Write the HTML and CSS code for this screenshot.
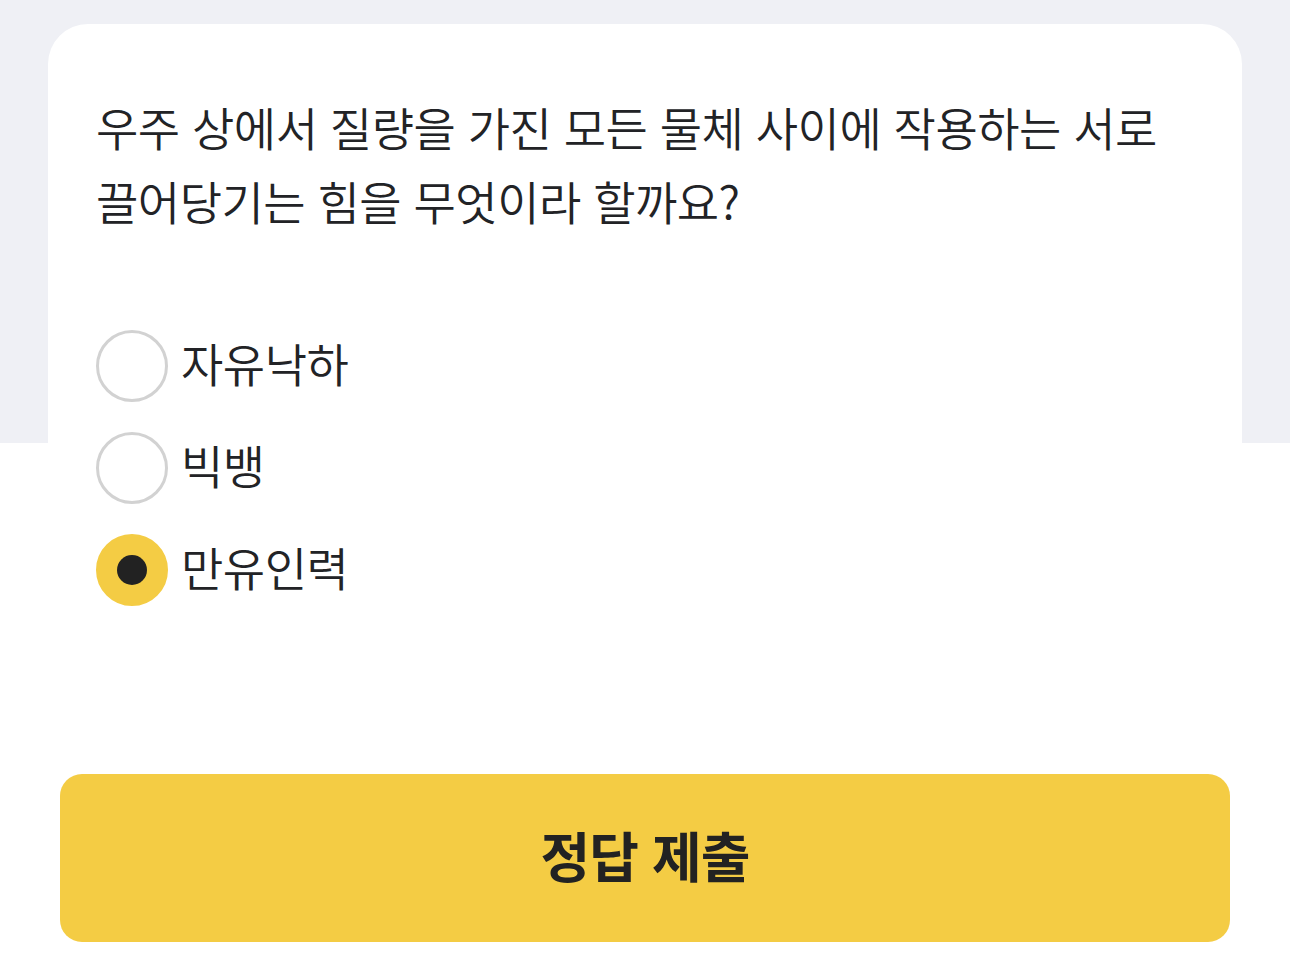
FILE: index.html
```html
<!DOCTYPE html>
<html lang="ko">
<head>
<meta charset="utf-8">
<title>퀴즈</title>
<link rel="stylesheet" href="styles.css">
</head>
<body>
<main class="page">
  <section class="card">
    <p class="question">우주 상에서 질량을 가진 모든 물체 사이에 작용하는 서로 끌어당기는 힘을 무엇이라 할까요?</p>
    <ul class="options">
      <li class="option"><span class="radio"></span><span class="label">자유낙하</span></li>
      <li class="option"><span class="radio"></span><span class="label">빅뱅</span></li>
      <li class="option is-selected"><span class="radio"><span class="dot"></span></span><span class="label">만유인력</span></li>
    </ul>
  </section>
  <div class="actions">
    <button class="submit" type="button">정답 제출</button>
  </div>
</main>
</body>
</html>
```
FILE: styles.css
```css
* { box-sizing: border-box; }
html, body { margin: 0; padding: 0; }
body {
  width: 1290px;
  height: 976px;
  overflow: hidden;
  background: linear-gradient(to bottom, #eff0f5 0, #eff0f5 443px, #ffffff 443px);
  font-family: "Noto Sans CJK KR", "Noto Sans", sans-serif;
  color: #222326;
}
.page {
  display: flex;
  flex-direction: column;
  padding-top: 24px;
}
.card {
  margin: 0 48px;
  background: #ffffff;
  border-radius: 40px 40px 0 0;
  padding: 65px 48px 0;
  height: 640px;
}
.question {
  margin: 0;
  font-size: 46px;
  line-height: 74px;
  letter-spacing: -0.5px;
  font-weight: 350;
}
.options {
  list-style: none;
  margin: 93px 0 0;
  padding: 0;
  display: flex;
  flex-direction: column;
  gap: 30px;
}
.option {
  display: flex;
  align-items: center;
  gap: 13px;
  height: 72px;
}
.radio {
  width: 72px;
  height: 72px;
  border-radius: 50%;
  border: 3px solid #d2d2d2;
  display: flex;
  align-items: center;
  justify-content: center;
  flex: none;
}
.is-selected .radio {
  background: #f4cc44;
  border-color: #f4cc44;
}
.dot {
  width: 30px;
  height: 30px;
  border-radius: 50%;
  background: #222222;
}
.label {
  font-size: 46px;
  font-weight: 350;
  letter-spacing: -0.5px;
  line-height: 72px;
  padding-bottom: 8px;
}
.actions {
  padding: 110px 60px 0;
}
.submit {
  width: 100%;
  height: 168px;
  border: 0;
  border-radius: 22px;
  background: #f4cc44;
  font-family: "Noto Sans CJK KR", "Noto Sans", sans-serif;
  font-size: 54px;
  font-weight: 700;
  color: #222222;
  letter-spacing: -1px;
  padding: 0 0 7px;
}
```
